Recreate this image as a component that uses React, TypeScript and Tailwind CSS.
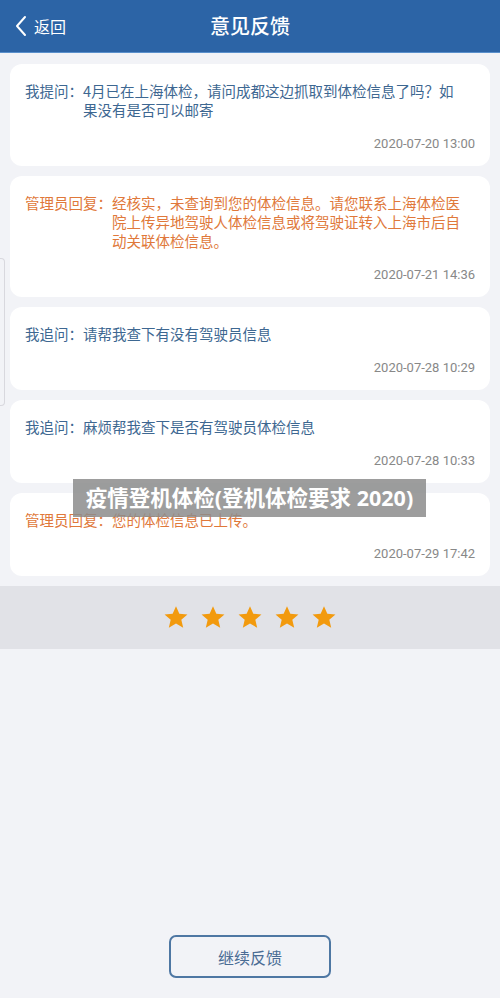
import React from "react";

const font = { fontFamily: '"Noto Sans CJK SC", Roboto, sans-serif' };

type Item = { label: string; lines: string[]; time: string; admin?: boolean };

const items: Item[] = [
  { label: "我提问：", lines: ["4月已在上海体检，请问成都这边抓取到体检信息了吗？如", "果没有是否可以邮寄"], time: "2020-07-20 13:00" },
  {
    label: "管理员回复：",
    lines: ["经核实，未查询到您的体检信息。请您联系上海体检医", "院上传异地驾驶人体检信息或将驾驶证转入上海市后自", "动关联体检信息。"],
    time: "2020-07-21 14:36",
    admin: true,
  },
  { label: "我追问：", lines: ["请帮我查下有没有驾驶员信息"], time: "2020-07-28 10:29" },
  { label: "我追问：", lines: ["麻烦帮我查下是否有驾驶员体检信息"], time: "2020-07-28 10:33" },
  { label: "管理员回复：", lines: ["您的体检信息已上传。"], time: "2020-07-29 17:42", admin: true },
];

const Star = () => (
  <svg width="26" height="25" viewBox="0 0 24 24">
    <path d="M12 1.2l3.2 7.2 7.8.7-5.9 5.1 1.8 7.7L12 17.8l-6.9 4.1 1.8-7.7-5.9-5.1 7.8-.7z" fill="#f29a0e" />
  </svg>
);

export default function App() {
  return (
    <div className="relative w-[500px] h-[998px] bg-[#f2f3f7] flex flex-col overflow-hidden" style={font}>
      <header className="h-[53px] bg-[#2c64a6] border-b border-[#5a90cc] flex items-center relative shrink-0">
        <div className="flex items-center pl-[14px] text-white">
          <svg width="14" height="22" viewBox="0 0 14 22">
            <path d="M11 2L3 11l8 9" stroke="white" strokeWidth="2" fill="none" strokeLinecap="round" strokeLinejoin="round" />
          </svg>
          <span className="ml-[6px] text-[16px] leading-none">返回</span>
        </div>
        <h1 className="absolute left-0 right-0 text-center text-white text-[20px] font-medium leading-none pointer-events-none">意见反馈</h1>
      </header>

      <div className="flex flex-col gap-[10px] px-[10px] pt-[11px]">
        {items.map((it, i) => (
          <div key={i} className="bg-white rounded-[12px] pl-[15px] pr-[15px] pt-[17px] pb-[14px]">
            <div className={`flex text-[14.5px] leading-[19px] ${it.admin ? "text-[#e0783a]" : "text-[#3d6791]"}`}>
              <span className="shrink-0">{it.label}</span>
              <div className="flex flex-col">
                {it.lines.map((l) => (
                  <span key={l} className="whitespace-nowrap">{l}</span>
                ))}
              </div>
            </div>
            <div className="text-right text-[13px] leading-[17px] text-[#888] mt-[16px]" style={{ fontFamily: "Roboto, sans-serif" }}>{it.time}</div>
          </div>
        ))}
      </div>

      <div className="mt-[10px] h-[63px] bg-[#e1e2e7] flex items-center justify-center gap-[11px]">
        <Star />
        <Star />
        <Star />
        <Star />
        <Star />
      </div>

      <div className="flex-1" />

      <div className="flex justify-center pb-[20px]">
        <button className="w-[162px] h-[43px] border-2 border-[#4e77a3] rounded-[7px] text-[16px] text-[#4a6c94]">继续反馈</button>
      </div>

      <div className="absolute left-0 top-[258px] w-[5px] h-[148px] border border-l-0 border-[#d8d8de] rounded-r-[4px]" />

      <div className="absolute left-[73px] top-[479px] w-[353px] h-[38px] bg-[#8c8c8c]/85 flex items-center justify-center text-white text-[21.5px] font-bold" style={{ fontFamily: '"Noto Sans", "Noto Sans CJK SC", sans-serif' }}>
        疫情登机体检(登机体检要求 2020)
      </div>
    </div>
  );
}
